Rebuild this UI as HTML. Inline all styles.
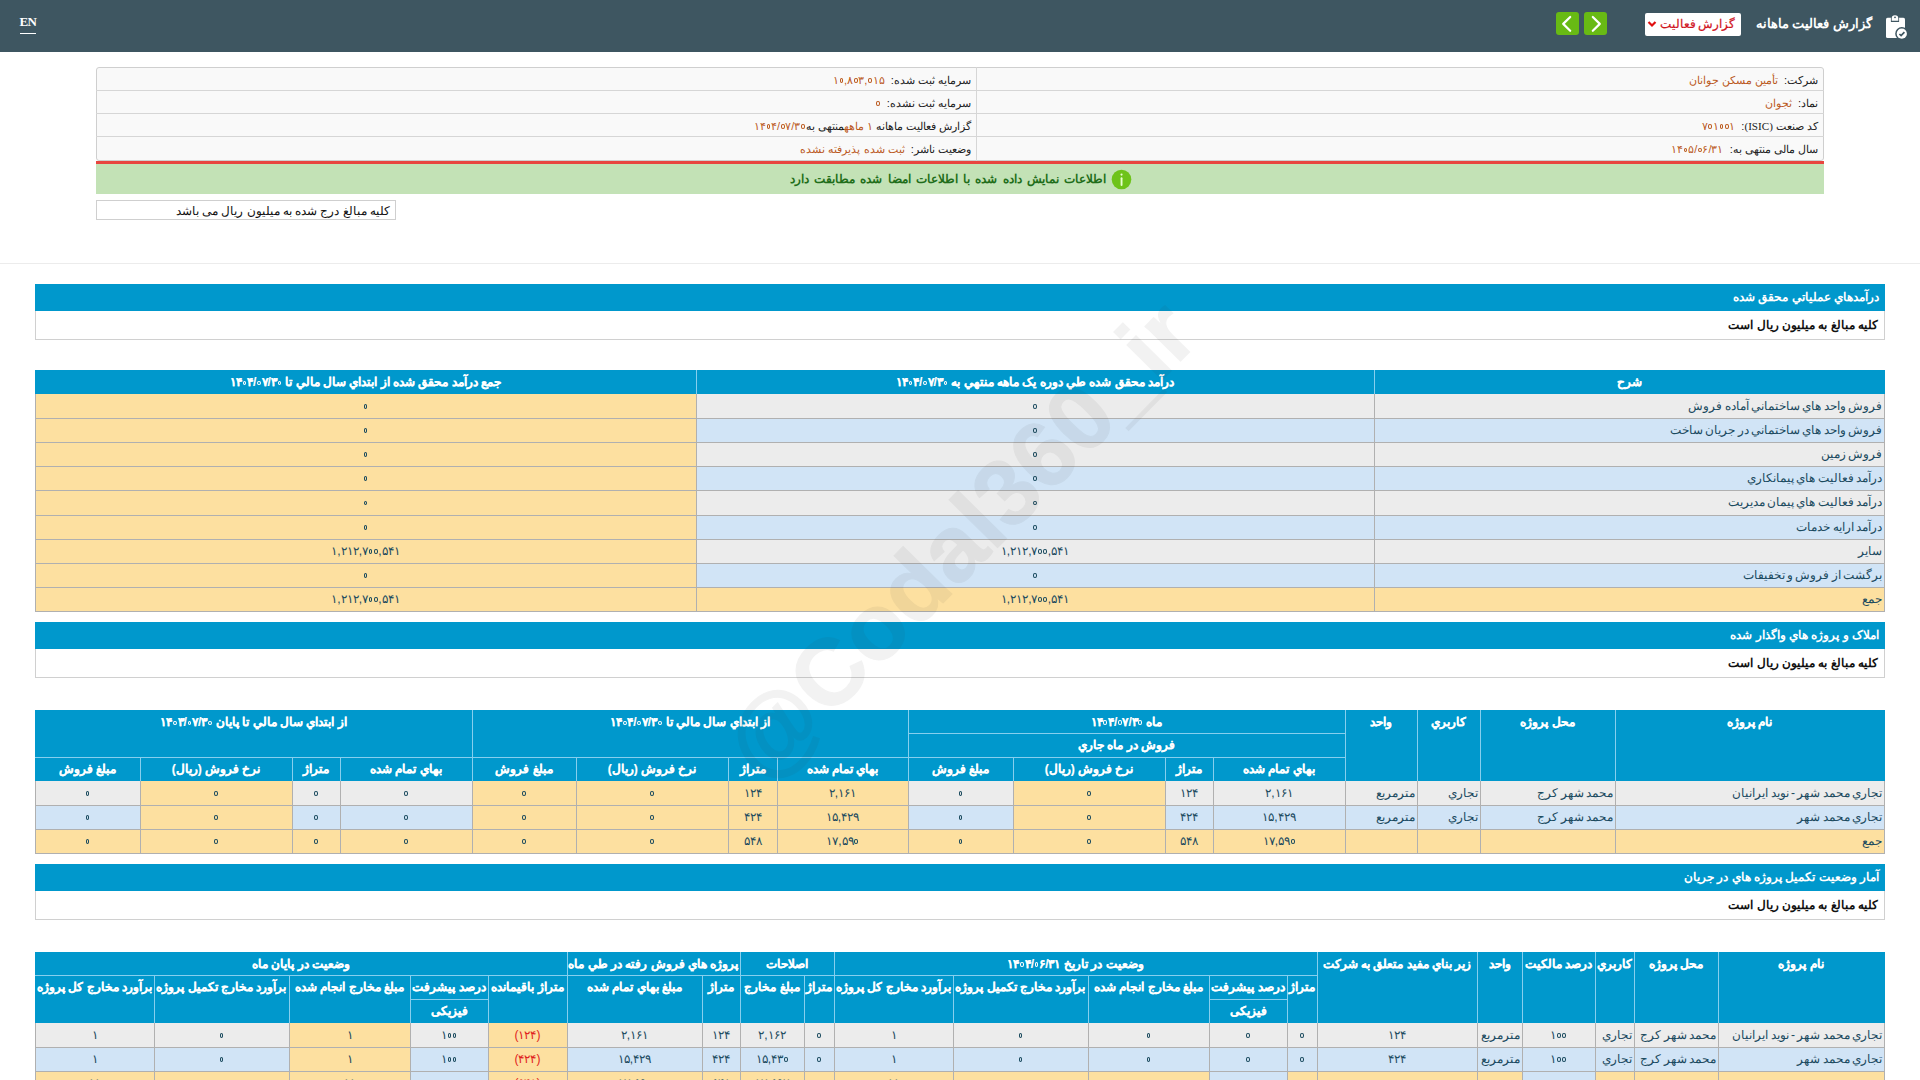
<!DOCTYPE html>
<html lang="fa" dir="rtl"><head><meta charset="utf-8"><title>codal</title>
<style>
html,body{margin:0;padding:0;width:1920px;height:1080px;overflow:hidden;background:#fff;font-family:"Liberation Sans",sans-serif}
body>div,body>svg{position:absolute}
.t{white-space:nowrap;direction:rtl}
.z{display:inline-block;width:1.8px;height:2.2px;border:1.25px solid currentColor;border-radius:50%;margin:0 0.7px;vertical-align:1px}
</style></head><body>
<div style="left:0px;top:0px;width:1920px;height:52px;background:#3e5661"></div>
<div class="t" style="left:19.5px;top:11.5px;font-family:'Liberation Serif',serif;font-size:13px;font-weight:bold;letter-spacing:-0.6px;line-height:20px;color:#fff;direction:ltr">EN</div>
<div style="left:20px;top:33px;width:16px;height:1px;background:#fff"></div>
<div class="t" style="right:48px;top:14.0px;line-height:20px;font-size:13px;font-weight:bold;color:#fff;">گزارش فعالیت ماهانه</div>
<div style="left:1645px;top:13px;width:96px;height:23px;background:#fff;border-radius:2px"></div>
<div class="t" style="right:184.5px;top:13.8px;line-height:20px;font-size:12px;font-weight:normal;color:#d0121c;word-spacing:-0.5px;-webkit-text-stroke:0.2px #d0121c">گزارش فعالیت</div>
<svg style="position:absolute;left:1647px;top:20px" width="10" height="8" viewBox="0 0 10 8"><path d="M1.5 2 L5 5.5 L8.5 2" stroke="#e01010" stroke-width="2.2" fill="none"/></svg>
<div style="left:1556px;top:12px;width:23px;height:23px;background:#68ba14;border-radius:3px"></div>
<svg style="position:absolute;left:1556px;top:12px" width="23" height="23" viewBox="0 0 23 23"><path d="M14.2 5 L7.2 11.9 L14.2 18.8" stroke="#fff" stroke-width="2.2" fill="none" stroke-linecap="round" stroke-linejoin="round"/></svg>
<div style="left:1584px;top:12px;width:23px;height:23px;background:#68ba14;border-radius:3px"></div>
<svg style="position:absolute;left:1584px;top:12px" width="23" height="23" viewBox="0 0 23 23"><path d="M8.8 5 L15.8 11.9 L8.8 18.8" stroke="#fff" stroke-width="2.2" fill="none" stroke-linecap="round" stroke-linejoin="round"/></svg>
<svg style="position:absolute;left:1878px;top:8px" width="36" height="36" viewBox="0 0 36 36">
<rect x="8" y="9.7" width="19" height="20.3" rx="1.6" fill="#fff"/>
<path d="M12.9 14 V10.5 A4.1 4.1 0 0 1 21.1 10.5 V14 Z" fill="#3e5661"/>
<path d="M13.7 12.8 V10.6 A3.3 3.3 0 0 1 20.3 10.6 V12.8 Z" fill="#fff"/>
<circle cx="17" cy="9.3" r="0.9" fill="#3e5661"/>
<circle cx="23.8" cy="25.7" r="6.6" fill="#3e5661"/>
<circle cx="23.8" cy="25.7" r="5.1" fill="#fff"/>
<path d="M21.4 26 L23.1 27.6 L26.4 24.2" stroke="#3e5661" stroke-width="1.7" fill="none"/>
</svg>
<div style="left:96px;top:67px;width:1728px;height:94px;background:#f9f9f9;border:1px solid #cfcfcf;border-radius:3px;box-sizing:border-box"></div>
<div style="left:96px;top:90px;width:1728px;height:1px;background:#d6d6d6"></div>
<div style="left:96px;top:113px;width:1728px;height:1px;background:#d6d6d6"></div>
<div style="left:96px;top:136px;width:1728px;height:1px;background:#d6d6d6"></div>
<div style="left:976px;top:67px;width:1px;height:94px;background:#d6d6d6"></div>
<div class="t" style="right:102px;top:69.5px;line-height:20px;font-size:11.1px;font-weight:normal;color:#222;">شرکت:&nbsp; <span style="color:#bb5a1e">تأمین مسکن جوانان</span></div>
<div class="t" style="right:949px;top:69.5px;line-height:20px;font-size:11.1px;font-weight:normal;color:#222;">سرمایه ثبت شده:&nbsp; <span style="color:#bb5a1e"><bdi dir="ltr">۱<i class="z"></i>,۸<i class="z"></i>۳,<i class="z"></i>۱۵</bdi></span></div>
<div class="t" style="right:102px;top:92.5px;line-height:20px;font-size:11.1px;font-weight:normal;color:#222;">نماد:&nbsp; <span style="color:#bb5a1e">ثجوان</span></div>
<div class="t" style="right:949px;top:92.5px;line-height:20px;font-size:11.1px;font-weight:normal;color:#222;">سرمایه ثبت نشده:&nbsp; <span style="color:#bb5a1e"><bdi dir="ltr"><i class="z"></i></bdi></span></div>
<div class="t" style="right:102px;top:115.5px;line-height:20px;font-size:11.1px;font-weight:normal;color:#222;">کد صنعت <span style="font-family:'Liberation Serif',serif">(ISIC)</span>:&nbsp; <span style="color:#bb5a1e"><bdi dir="ltr">۷<i class="z"></i>۱<i class="z"></i><i class="z"></i>۱</bdi></span></div>
<div class="t" style="right:949px;top:115.5px;line-height:20px;font-size:11.1px;font-weight:normal;color:#222;">گزارش فعالیت ماهانه <span style="color:#bb5a1e">۱ ماهه</span>منتهی به<span style="color:#bb5a1e"><bdi dir="ltr">۱۴<i class="z"></i>۴/<i class="z"></i>۷/۳<i class="z"></i></bdi></span></div>
<div class="t" style="right:102px;top:139.0px;line-height:20px;font-size:11.1px;font-weight:normal;color:#222;">سال مالی منتهی به:&nbsp; <span style="color:#bb5a1e"><bdi dir="ltr">۱۴<i class="z"></i>۵/<i class="z"></i>۶/۳۱</bdi></span></div>
<div class="t" style="right:949px;top:139.0px;line-height:20px;font-size:11.1px;font-weight:normal;color:#222;">وضعیت ناشر:&nbsp; <span style="color:#bb5a1e">ثبت شده پذیرفته نشده</span></div>
<div style="left:96px;top:161px;width:1728px;height:3px;background:#e8453f"></div>
<div style="left:96px;top:164px;width:1728px;height:30px;background:#c3e2b6"></div>
<div class="t" style="right:814px;top:169.0px;line-height:20px;font-size:12px;font-weight:bold;color:#1f6e1a;word-spacing:1.9px">اطلاعات نمایش داده شده با اطلاعات امضا شده مطابقت دارد</div>
<svg style="position:absolute;left:1111px;top:169px" width="21" height="21" viewBox="0 0 21 21"><circle cx="10.5" cy="10.5" r="9.8" fill="#6ec31a"/><rect x="9.6" y="8.3" width="1.9" height="8.7" rx="0.9" fill="#e8ffd0"/><circle cx="10.55" cy="5.6" r="1.1" fill="#e8ffd0"/></svg>
<div style="left:96px;top:200px;width:300px;height:20px;border:1px solid #cfcfcf;box-sizing:border-box;background:#fff"></div>
<div class="t" style="right:1530px;top:200.5px;line-height:20px;font-size:11.8px;font-weight:normal;color:#111;">کلیه مبالغ درج شده به میلیون ریال می باشد</div>
<div style="left:0px;top:263px;width:1920px;height:1px;background:#ececec"></div>
<div style="left:35px;top:284px;width:1850px;height:27px;background:#0098cc"></div>
<div class="t" style="right:41px;top:286.5px;line-height:20px;font-size:12px;font-weight:bold;color:#fff;">درآمدهاي عملياتي محقق شده</div>
<div style="left:35px;top:311px;width:1850px;height:29px;border:1px solid #d0d0d0;border-top:none;box-sizing:border-box;background:#fff"></div>
<div class="t" style="right:42px;top:314.5px;line-height:20px;font-size:12px;font-weight:bold;color:#111;">کلیه مبالغ به میلیون ریال است</div>
<div style="left:35px;top:622px;width:1850px;height:27px;background:#0098cc"></div>
<div class="t" style="right:41px;top:624.5px;line-height:20px;font-size:12px;font-weight:bold;color:#fff;">املاک و پروژه هاي واگذار شده</div>
<div style="left:35px;top:649px;width:1850px;height:29px;border:1px solid #d0d0d0;border-top:none;box-sizing:border-box;background:#fff"></div>
<div class="t" style="right:42px;top:652.5px;line-height:20px;font-size:12px;font-weight:bold;color:#111;">کلیه مبالغ به میلیون ریال است</div>
<div style="left:35px;top:864px;width:1850px;height:27px;background:#0098cc"></div>
<div class="t" style="right:41px;top:866.5px;line-height:20px;font-size:12px;font-weight:bold;color:#fff;">آمار وضعیت تکمیل پروژه هاي در جريان</div>
<div style="left:35px;top:891px;width:1850px;height:29px;border:1px solid #d0d0d0;border-top:none;box-sizing:border-box;background:#fff"></div>
<div class="t" style="right:42px;top:894.5px;line-height:20px;font-size:12px;font-weight:bold;color:#111;">کلیه مبالغ به میلیون ریال است</div>
<div style="left:35px;top:370px;width:1850px;height:24px;background:#86cfee"></div>
<div style="left:35px;top:370px;width:661px;height:24px;background:#0098cc"></div>
<div class="t" style="left:35px;width:661px;top:372.0px;line-height:20px;font-size:12px;font-weight:bold;color:#fff;text-align:center;-webkit-text-stroke:0.15px #fff">جمع درآمد محقق شده از ابتداي سال مالي تا <bdi dir="ltr">۱۴<i class="z"></i>۴/<i class="z"></i>۷/۳<i class="z"></i></bdi></div>
<div style="left:697px;top:370px;width:677px;height:24px;background:#0098cc"></div>
<div class="t" style="left:696px;width:678px;top:372.0px;line-height:20px;font-size:12px;font-weight:bold;color:#fff;text-align:center;-webkit-text-stroke:0.15px #fff">درآمد محقق شده طي دوره يک ماهه منتهي به <bdi dir="ltr">۱۴<i class="z"></i>۴/<i class="z"></i>۷/۳<i class="z"></i></bdi></div>
<div style="left:1375px;top:370px;width:510px;height:24px;background:#0098cc"></div>
<div class="t" style="left:1374px;width:510px;top:372.0px;line-height:20px;font-size:12px;font-weight:bold;color:#fff;text-align:center;-webkit-text-stroke:0.15px #fff">شرح</div>
<div style="left:35px;top:394px;width:1850px;height:218.125px;background:#b0b0b0"></div>
<div style="left:36px;top:394px;width:660px;height:24px;background:#fde0a0"></div>
<div class="t" style="left:35px;width:661px;top:395.5px;line-height:20px;font-size:12px;font-weight:normal;color:#1a4a5e;text-align:center;"><bdi dir="ltr"><i class="z"></i></bdi></div>
<div style="left:697px;top:394px;width:677px;height:24px;background:#ececec"></div>
<div class="t" style="left:696px;width:678px;top:395.5px;line-height:20px;font-size:12px;font-weight:normal;color:#1a4a5e;text-align:center;"><bdi dir="ltr"><i class="z"></i></bdi></div>
<div style="left:1375px;top:394px;width:509px;height:24px;background:#ececec"></div>
<div class="t" style="right:38px;top:395.5px;line-height:20px;font-size:12px;font-weight:normal;color:#1a4a5e;word-spacing:-1px">فروش واحد هاي ساختماني آماده فروش</div>
<div style="left:36px;top:419px;width:660px;height:23px;background:#fde0a0"></div>
<div class="t" style="left:35px;width:661px;top:419.5px;line-height:20px;font-size:12px;font-weight:normal;color:#1a4a5e;text-align:center;"><bdi dir="ltr"><i class="z"></i></bdi></div>
<div style="left:697px;top:419px;width:677px;height:23px;background:#d1e4f6"></div>
<div class="t" style="left:696px;width:678px;top:419.5px;line-height:20px;font-size:12px;font-weight:normal;color:#1a4a5e;text-align:center;"><bdi dir="ltr"><i class="z"></i></bdi></div>
<div style="left:1375px;top:419px;width:509px;height:23px;background:#d1e4f6"></div>
<div class="t" style="right:38px;top:419.5px;line-height:20px;font-size:12px;font-weight:normal;color:#1a4a5e;word-spacing:-1px">فروش واحد هاي ساختماني در جريان ساخت</div>
<div style="left:36px;top:443px;width:660px;height:23px;background:#fde0a0"></div>
<div class="t" style="left:35px;width:661px;top:443.5px;line-height:20px;font-size:12px;font-weight:normal;color:#1a4a5e;text-align:center;"><bdi dir="ltr"><i class="z"></i></bdi></div>
<div style="left:697px;top:443px;width:677px;height:23px;background:#ececec"></div>
<div class="t" style="left:696px;width:678px;top:443.5px;line-height:20px;font-size:12px;font-weight:normal;color:#1a4a5e;text-align:center;"><bdi dir="ltr"><i class="z"></i></bdi></div>
<div style="left:1375px;top:443px;width:509px;height:23px;background:#ececec"></div>
<div class="t" style="right:38px;top:443.5px;line-height:20px;font-size:12px;font-weight:normal;color:#1a4a5e;word-spacing:-1px">فروش زمين</div>
<div style="left:36px;top:467px;width:660px;height:23px;background:#fde0a0"></div>
<div class="t" style="left:35px;width:661px;top:467.5px;line-height:20px;font-size:12px;font-weight:normal;color:#1a4a5e;text-align:center;"><bdi dir="ltr"><i class="z"></i></bdi></div>
<div style="left:697px;top:467px;width:677px;height:23px;background:#d1e4f6"></div>
<div class="t" style="left:696px;width:678px;top:467.5px;line-height:20px;font-size:12px;font-weight:normal;color:#1a4a5e;text-align:center;"><bdi dir="ltr"><i class="z"></i></bdi></div>
<div style="left:1375px;top:467px;width:509px;height:23px;background:#d1e4f6"></div>
<div class="t" style="right:38px;top:467.5px;line-height:20px;font-size:12px;font-weight:normal;color:#1a4a5e;word-spacing:-1px">درآمد فعاليت هاي پيمانكاري</div>
<div style="left:36px;top:491px;width:660px;height:24px;background:#fde0a0"></div>
<div class="t" style="left:35px;width:661px;top:492.0px;line-height:20px;font-size:12px;font-weight:normal;color:#1a4a5e;text-align:center;"><bdi dir="ltr"><i class="z"></i></bdi></div>
<div style="left:697px;top:491px;width:677px;height:24px;background:#ececec"></div>
<div class="t" style="left:696px;width:678px;top:492.0px;line-height:20px;font-size:12px;font-weight:normal;color:#1a4a5e;text-align:center;"><bdi dir="ltr"><i class="z"></i></bdi></div>
<div style="left:1375px;top:491px;width:509px;height:24px;background:#ececec"></div>
<div class="t" style="right:38px;top:492.0px;line-height:20px;font-size:12px;font-weight:normal;color:#1a4a5e;word-spacing:-1px">درآمد فعاليت هاي پيمان مديريت</div>
<div style="left:36px;top:516px;width:660px;height:23px;background:#fde0a0"></div>
<div class="t" style="left:35px;width:661px;top:516.5px;line-height:20px;font-size:12px;font-weight:normal;color:#1a4a5e;text-align:center;"><bdi dir="ltr"><i class="z"></i></bdi></div>
<div style="left:697px;top:516px;width:677px;height:23px;background:#d1e4f6"></div>
<div class="t" style="left:696px;width:678px;top:516.5px;line-height:20px;font-size:12px;font-weight:normal;color:#1a4a5e;text-align:center;"><bdi dir="ltr"><i class="z"></i></bdi></div>
<div style="left:1375px;top:516px;width:509px;height:23px;background:#d1e4f6"></div>
<div class="t" style="right:38px;top:516.5px;line-height:20px;font-size:12px;font-weight:normal;color:#1a4a5e;word-spacing:-1px">درآمد ارايه خدمات</div>
<div style="left:36px;top:540px;width:660px;height:23px;background:#fde0a0"></div>
<div class="t" style="left:35px;width:661px;top:540.5px;line-height:20px;font-size:12px;font-weight:normal;color:#1a4a5e;text-align:center;"><bdi dir="ltr">۱,۲۱۲,۷<i class="z"></i><i class="z"></i>,۵۴۱</bdi></div>
<div style="left:697px;top:540px;width:677px;height:23px;background:#ececec"></div>
<div class="t" style="left:696px;width:678px;top:540.5px;line-height:20px;font-size:12px;font-weight:normal;color:#1a4a5e;text-align:center;"><bdi dir="ltr">۱,۲۱۲,۷<i class="z"></i><i class="z"></i>,۵۴۱</bdi></div>
<div style="left:1375px;top:540px;width:509px;height:23px;background:#ececec"></div>
<div class="t" style="right:38px;top:540.5px;line-height:20px;font-size:12px;font-weight:normal;color:#1a4a5e;word-spacing:-1px">ساير</div>
<div style="left:36px;top:564px;width:660px;height:23px;background:#fde0a0"></div>
<div class="t" style="left:35px;width:661px;top:564.5px;line-height:20px;font-size:12px;font-weight:normal;color:#1a4a5e;text-align:center;"><bdi dir="ltr"><i class="z"></i></bdi></div>
<div style="left:697px;top:564px;width:677px;height:23px;background:#d1e4f6"></div>
<div class="t" style="left:696px;width:678px;top:564.5px;line-height:20px;font-size:12px;font-weight:normal;color:#1a4a5e;text-align:center;"><bdi dir="ltr"><i class="z"></i></bdi></div>
<div style="left:1375px;top:564px;width:509px;height:23px;background:#d1e4f6"></div>
<div class="t" style="right:38px;top:564.5px;line-height:20px;font-size:12px;font-weight:normal;color:#1a4a5e;word-spacing:-1px">برگشت از فروش و تخفيفات</div>
<div style="left:36px;top:588px;width:660px;height:23px;background:#fde0a0"></div>
<div class="t" style="left:35px;width:661px;top:588.5px;line-height:20px;font-size:12px;font-weight:normal;color:#1a4a5e;text-align:center;"><bdi dir="ltr">۱,۲۱۲,۷<i class="z"></i><i class="z"></i>,۵۴۱</bdi></div>
<div style="left:697px;top:588px;width:677px;height:23px;background:#fde0a0"></div>
<div class="t" style="left:696px;width:678px;top:588.5px;line-height:20px;font-size:12px;font-weight:normal;color:#1a4a5e;text-align:center;"><bdi dir="ltr">۱,۲۱۲,۷<i class="z"></i><i class="z"></i>,۵۴۱</bdi></div>
<div style="left:1375px;top:588px;width:509px;height:23px;background:#fde0a0"></div>
<div class="t" style="right:38px;top:588.5px;line-height:20px;font-size:12px;font-weight:normal;color:#1a4a5e;word-spacing:-1px">جمع</div>
<div style="left:35px;top:710px;width:1850px;height:71px;background:#86cfee"></div>
<div style="left:35px;top:758px;width:105px;height:23px;background:#0098cc"></div>
<div class="t" style="left:35px;width:105px;top:759.0px;line-height:20px;font-size:12px;font-weight:bold;color:#fff;text-align:center;-webkit-text-stroke:0.15px #fff">مبلغ فروش</div>
<div style="left:141px;top:758px;width:151px;height:23px;background:#0098cc"></div>
<div class="t" style="left:140px;width:152px;top:759.0px;line-height:20px;font-size:12px;font-weight:bold;color:#fff;text-align:center;-webkit-text-stroke:0.15px #fff">نرخ فروش (ريال)</div>
<div style="left:293px;top:758px;width:47px;height:23px;background:#0098cc"></div>
<div class="t" style="left:292px;width:48px;top:759.0px;line-height:20px;font-size:12px;font-weight:bold;color:#fff;text-align:center;-webkit-text-stroke:0.15px #fff">متراژ</div>
<div style="left:341px;top:758px;width:131px;height:23px;background:#0098cc"></div>
<div class="t" style="left:340px;width:132px;top:759.0px;line-height:20px;font-size:12px;font-weight:bold;color:#fff;text-align:center;-webkit-text-stroke:0.15px #fff">بهاي تمام شده</div>
<div style="left:473px;top:758px;width:103px;height:23px;background:#0098cc"></div>
<div class="t" style="left:472px;width:104px;top:759.0px;line-height:20px;font-size:12px;font-weight:bold;color:#fff;text-align:center;-webkit-text-stroke:0.15px #fff">مبلغ فروش</div>
<div style="left:577px;top:758px;width:151px;height:23px;background:#0098cc"></div>
<div class="t" style="left:576px;width:152px;top:759.0px;line-height:20px;font-size:12px;font-weight:bold;color:#fff;text-align:center;-webkit-text-stroke:0.15px #fff">نرخ فروش (ريال)</div>
<div style="left:729px;top:758px;width:48px;height:23px;background:#0098cc"></div>
<div class="t" style="left:728px;width:49px;top:759.0px;line-height:20px;font-size:12px;font-weight:bold;color:#fff;text-align:center;-webkit-text-stroke:0.15px #fff">متراژ</div>
<div style="left:778px;top:758px;width:130px;height:23px;background:#0098cc"></div>
<div class="t" style="left:777px;width:131px;top:759.0px;line-height:20px;font-size:12px;font-weight:bold;color:#fff;text-align:center;-webkit-text-stroke:0.15px #fff">بهاي تمام شده</div>
<div style="left:909px;top:758px;width:104px;height:23px;background:#0098cc"></div>
<div class="t" style="left:908px;width:105px;top:759.0px;line-height:20px;font-size:12px;font-weight:bold;color:#fff;text-align:center;-webkit-text-stroke:0.15px #fff">مبلغ فروش</div>
<div style="left:1014px;top:758px;width:151px;height:23px;background:#0098cc"></div>
<div class="t" style="left:1013px;width:152px;top:759.0px;line-height:20px;font-size:12px;font-weight:bold;color:#fff;text-align:center;-webkit-text-stroke:0.15px #fff">نرخ فروش (ريال)</div>
<div style="left:1166px;top:758px;width:47px;height:23px;background:#0098cc"></div>
<div class="t" style="left:1165px;width:48px;top:759.0px;line-height:20px;font-size:12px;font-weight:bold;color:#fff;text-align:center;-webkit-text-stroke:0.15px #fff">متراژ</div>
<div style="left:1214px;top:758px;width:131px;height:23px;background:#0098cc"></div>
<div class="t" style="left:1213px;width:132px;top:759.0px;line-height:20px;font-size:12px;font-weight:bold;color:#fff;text-align:center;-webkit-text-stroke:0.15px #fff">بهاي تمام شده</div>
<div style="left:35px;top:710px;width:437px;height:47px;background:#0098cc"></div>
<div class="t" style="left:35px;width:437px;top:711.8px;line-height:20px;font-size:12px;font-weight:bold;color:#fff;text-align:center;-webkit-text-stroke:0.15px #fff">از ابتداي سال مالي تا پايان <bdi dir="ltr">۱۴<i class="z"></i>۳/<i class="z"></i>۷/۳<i class="z"></i></bdi></div>
<div style="left:473px;top:710px;width:435px;height:47px;background:#0098cc"></div>
<div class="t" style="left:472px;width:436px;top:711.8px;line-height:20px;font-size:12px;font-weight:bold;color:#fff;text-align:center;-webkit-text-stroke:0.15px #fff">از ابتداي سال مالي تا <bdi dir="ltr">۱۴<i class="z"></i>۴/<i class="z"></i>۷/۳<i class="z"></i></bdi></div>
<div style="left:909px;top:710px;width:436px;height:23px;background:#0098cc"></div>
<div class="t" style="left:908px;width:437px;top:711.5px;line-height:20px;font-size:12px;font-weight:bold;color:#fff;text-align:center;-webkit-text-stroke:0.15px #fff">ماه <bdi dir="ltr">۱۴<i class="z"></i>۴/<i class="z"></i>۷/۳<i class="z"></i></bdi></div>
<div style="left:909px;top:734px;width:436px;height:23px;background:#0098cc"></div>
<div class="t" style="left:908px;width:437px;top:735.0px;line-height:20px;font-size:12px;font-weight:bold;color:#fff;text-align:center;-webkit-text-stroke:0.15px #fff">فروش در ماه جاري</div>
<div style="left:1346px;top:710px;width:71px;height:71px;background:#0098cc"></div>
<div class="t" style="left:1345px;width:72px;top:711.8px;line-height:20px;font-size:12px;font-weight:bold;color:#fff;text-align:center;-webkit-text-stroke:0.15px #fff">واحد</div>
<div style="left:1418px;top:710px;width:62px;height:71px;background:#0098cc"></div>
<div class="t" style="left:1417px;width:63px;top:711.8px;line-height:20px;font-size:12px;font-weight:bold;color:#fff;text-align:center;-webkit-text-stroke:0.15px #fff">کاربري</div>
<div style="left:1481px;top:710px;width:134px;height:71px;background:#0098cc"></div>
<div class="t" style="left:1480px;width:135px;top:711.8px;line-height:20px;font-size:12px;font-weight:bold;color:#fff;text-align:center;-webkit-text-stroke:0.15px #fff">محل پروژه</div>
<div style="left:1616px;top:710px;width:269px;height:71px;background:#0098cc"></div>
<div class="t" style="left:1615px;width:269px;top:711.8px;line-height:20px;font-size:12px;font-weight:bold;color:#fff;text-align:center;-webkit-text-stroke:0.15px #fff">نام پروژه</div>
<div style="left:35px;top:781px;width:1850px;height:73px;background:#b0b0b0"></div>
<div style="left:36px;top:781px;width:104px;height:24px;background:#ececec"></div>
<div class="t" style="left:35px;width:105px;top:782.5px;line-height:20px;font-size:12px;font-weight:normal;color:#1a4a5e;text-align:center;"><bdi dir="ltr"><i class="z"></i></bdi></div>
<div style="left:141px;top:781px;width:151px;height:24px;background:#fde0a0"></div>
<div class="t" style="left:140px;width:152px;top:782.5px;line-height:20px;font-size:12px;font-weight:normal;color:#1a4a5e;text-align:center;"><bdi dir="ltr"><i class="z"></i></bdi></div>
<div style="left:293px;top:781px;width:47px;height:24px;background:#ececec"></div>
<div class="t" style="left:292px;width:48px;top:782.5px;line-height:20px;font-size:12px;font-weight:normal;color:#1a4a5e;text-align:center;"><bdi dir="ltr"><i class="z"></i></bdi></div>
<div style="left:341px;top:781px;width:131px;height:24px;background:#ececec"></div>
<div class="t" style="left:340px;width:132px;top:782.5px;line-height:20px;font-size:12px;font-weight:normal;color:#1a4a5e;text-align:center;"><bdi dir="ltr"><i class="z"></i></bdi></div>
<div style="left:473px;top:781px;width:103px;height:24px;background:#fde0a0"></div>
<div class="t" style="left:472px;width:104px;top:782.5px;line-height:20px;font-size:12px;font-weight:normal;color:#1a4a5e;text-align:center;"><bdi dir="ltr"><i class="z"></i></bdi></div>
<div style="left:577px;top:781px;width:151px;height:24px;background:#fde0a0"></div>
<div class="t" style="left:576px;width:152px;top:782.5px;line-height:20px;font-size:12px;font-weight:normal;color:#1a4a5e;text-align:center;"><bdi dir="ltr"><i class="z"></i></bdi></div>
<div style="left:729px;top:781px;width:48px;height:24px;background:#fde0a0"></div>
<div class="t" style="left:728px;width:49px;top:782.5px;line-height:20px;font-size:12px;font-weight:normal;color:#1a4a5e;text-align:center;"><bdi dir="ltr">۱۲۴</bdi></div>
<div style="left:778px;top:781px;width:130px;height:24px;background:#fde0a0"></div>
<div class="t" style="left:777px;width:131px;top:782.5px;line-height:20px;font-size:12px;font-weight:normal;color:#1a4a5e;text-align:center;"><bdi dir="ltr">۲,۱۶۱</bdi></div>
<div style="left:909px;top:781px;width:104px;height:24px;background:#ececec"></div>
<div class="t" style="left:908px;width:105px;top:782.5px;line-height:20px;font-size:12px;font-weight:normal;color:#1a4a5e;text-align:center;"><bdi dir="ltr"><i class="z"></i></bdi></div>
<div style="left:1014px;top:781px;width:151px;height:24px;background:#fde0a0"></div>
<div class="t" style="left:1013px;width:152px;top:782.5px;line-height:20px;font-size:12px;font-weight:normal;color:#1a4a5e;text-align:center;"><bdi dir="ltr"><i class="z"></i></bdi></div>
<div style="left:1166px;top:781px;width:47px;height:24px;background:#ececec"></div>
<div class="t" style="left:1165px;width:48px;top:782.5px;line-height:20px;font-size:12px;font-weight:normal;color:#1a4a5e;text-align:center;"><bdi dir="ltr">۱۲۴</bdi></div>
<div style="left:1214px;top:781px;width:131px;height:24px;background:#ececec"></div>
<div class="t" style="left:1213px;width:132px;top:782.5px;line-height:20px;font-size:12px;font-weight:normal;color:#1a4a5e;text-align:center;"><bdi dir="ltr">۲,۱۶۱</bdi></div>
<div style="left:1346px;top:781px;width:71px;height:24px;background:#ececec"></div>
<div class="t" style="right:505px;top:782.5px;line-height:20px;font-size:12px;font-weight:normal;color:#1a4a5e;word-spacing:-1px">مترمربع</div>
<div style="left:1418px;top:781px;width:62px;height:24px;background:#ececec"></div>
<div class="t" style="right:442px;top:782.5px;line-height:20px;font-size:12px;font-weight:normal;color:#1a4a5e;word-spacing:-1px">تجاري</div>
<div style="left:1481px;top:781px;width:134px;height:24px;background:#ececec"></div>
<div class="t" style="right:307px;top:782.5px;line-height:20px;font-size:12px;font-weight:normal;color:#1a4a5e;word-spacing:-1px">محمد شهر کرج</div>
<div style="left:1616px;top:781px;width:268px;height:24px;background:#ececec"></div>
<div class="t" style="right:38px;top:782.5px;line-height:20px;font-size:12px;font-weight:normal;color:#1a4a5e;word-spacing:-1px">تجاري محمد شهر - نويد ايرانيان</div>
<div style="left:36px;top:806px;width:104px;height:23px;background:#d1e4f6"></div>
<div class="t" style="left:35px;width:105px;top:806.5px;line-height:20px;font-size:12px;font-weight:normal;color:#1a4a5e;text-align:center;"><bdi dir="ltr"><i class="z"></i></bdi></div>
<div style="left:141px;top:806px;width:151px;height:23px;background:#fde0a0"></div>
<div class="t" style="left:140px;width:152px;top:806.5px;line-height:20px;font-size:12px;font-weight:normal;color:#1a4a5e;text-align:center;"><bdi dir="ltr"><i class="z"></i></bdi></div>
<div style="left:293px;top:806px;width:47px;height:23px;background:#d1e4f6"></div>
<div class="t" style="left:292px;width:48px;top:806.5px;line-height:20px;font-size:12px;font-weight:normal;color:#1a4a5e;text-align:center;"><bdi dir="ltr"><i class="z"></i></bdi></div>
<div style="left:341px;top:806px;width:131px;height:23px;background:#d1e4f6"></div>
<div class="t" style="left:340px;width:132px;top:806.5px;line-height:20px;font-size:12px;font-weight:normal;color:#1a4a5e;text-align:center;"><bdi dir="ltr"><i class="z"></i></bdi></div>
<div style="left:473px;top:806px;width:103px;height:23px;background:#fde0a0"></div>
<div class="t" style="left:472px;width:104px;top:806.5px;line-height:20px;font-size:12px;font-weight:normal;color:#1a4a5e;text-align:center;"><bdi dir="ltr"><i class="z"></i></bdi></div>
<div style="left:577px;top:806px;width:151px;height:23px;background:#fde0a0"></div>
<div class="t" style="left:576px;width:152px;top:806.5px;line-height:20px;font-size:12px;font-weight:normal;color:#1a4a5e;text-align:center;"><bdi dir="ltr"><i class="z"></i></bdi></div>
<div style="left:729px;top:806px;width:48px;height:23px;background:#fde0a0"></div>
<div class="t" style="left:728px;width:49px;top:806.5px;line-height:20px;font-size:12px;font-weight:normal;color:#1a4a5e;text-align:center;"><bdi dir="ltr">۴۲۴</bdi></div>
<div style="left:778px;top:806px;width:130px;height:23px;background:#fde0a0"></div>
<div class="t" style="left:777px;width:131px;top:806.5px;line-height:20px;font-size:12px;font-weight:normal;color:#1a4a5e;text-align:center;"><bdi dir="ltr">۱۵,۴۲۹</bdi></div>
<div style="left:909px;top:806px;width:104px;height:23px;background:#d1e4f6"></div>
<div class="t" style="left:908px;width:105px;top:806.5px;line-height:20px;font-size:12px;font-weight:normal;color:#1a4a5e;text-align:center;"><bdi dir="ltr"><i class="z"></i></bdi></div>
<div style="left:1014px;top:806px;width:151px;height:23px;background:#fde0a0"></div>
<div class="t" style="left:1013px;width:152px;top:806.5px;line-height:20px;font-size:12px;font-weight:normal;color:#1a4a5e;text-align:center;"><bdi dir="ltr"><i class="z"></i></bdi></div>
<div style="left:1166px;top:806px;width:47px;height:23px;background:#d1e4f6"></div>
<div class="t" style="left:1165px;width:48px;top:806.5px;line-height:20px;font-size:12px;font-weight:normal;color:#1a4a5e;text-align:center;"><bdi dir="ltr">۴۲۴</bdi></div>
<div style="left:1214px;top:806px;width:131px;height:23px;background:#d1e4f6"></div>
<div class="t" style="left:1213px;width:132px;top:806.5px;line-height:20px;font-size:12px;font-weight:normal;color:#1a4a5e;text-align:center;"><bdi dir="ltr">۱۵,۴۲۹</bdi></div>
<div style="left:1346px;top:806px;width:71px;height:23px;background:#d1e4f6"></div>
<div class="t" style="right:505px;top:806.5px;line-height:20px;font-size:12px;font-weight:normal;color:#1a4a5e;word-spacing:-1px">مترمربع</div>
<div style="left:1418px;top:806px;width:62px;height:23px;background:#d1e4f6"></div>
<div class="t" style="right:442px;top:806.5px;line-height:20px;font-size:12px;font-weight:normal;color:#1a4a5e;word-spacing:-1px">تجاري</div>
<div style="left:1481px;top:806px;width:134px;height:23px;background:#d1e4f6"></div>
<div class="t" style="right:307px;top:806.5px;line-height:20px;font-size:12px;font-weight:normal;color:#1a4a5e;word-spacing:-1px">محمد شهر کرج</div>
<div style="left:1616px;top:806px;width:268px;height:23px;background:#d1e4f6"></div>
<div class="t" style="right:38px;top:806.5px;line-height:20px;font-size:12px;font-weight:normal;color:#1a4a5e;word-spacing:-1px">تجاري محمد شهر</div>
<div style="left:36px;top:830px;width:104px;height:23px;background:#fde0a0"></div>
<div class="t" style="left:35px;width:105px;top:830.5px;line-height:20px;font-size:12px;font-weight:normal;color:#1a4a5e;text-align:center;"><bdi dir="ltr"><i class="z"></i></bdi></div>
<div style="left:141px;top:830px;width:151px;height:23px;background:#fde0a0"></div>
<div class="t" style="left:140px;width:152px;top:830.5px;line-height:20px;font-size:12px;font-weight:normal;color:#1a4a5e;text-align:center;"><bdi dir="ltr"><i class="z"></i></bdi></div>
<div style="left:293px;top:830px;width:47px;height:23px;background:#fde0a0"></div>
<div class="t" style="left:292px;width:48px;top:830.5px;line-height:20px;font-size:12px;font-weight:normal;color:#1a4a5e;text-align:center;"><bdi dir="ltr"><i class="z"></i></bdi></div>
<div style="left:341px;top:830px;width:131px;height:23px;background:#fde0a0"></div>
<div class="t" style="left:340px;width:132px;top:830.5px;line-height:20px;font-size:12px;font-weight:normal;color:#1a4a5e;text-align:center;"><bdi dir="ltr"><i class="z"></i></bdi></div>
<div style="left:473px;top:830px;width:103px;height:23px;background:#fde0a0"></div>
<div class="t" style="left:472px;width:104px;top:830.5px;line-height:20px;font-size:12px;font-weight:normal;color:#1a4a5e;text-align:center;"><bdi dir="ltr"><i class="z"></i></bdi></div>
<div style="left:577px;top:830px;width:151px;height:23px;background:#fde0a0"></div>
<div class="t" style="left:576px;width:152px;top:830.5px;line-height:20px;font-size:12px;font-weight:normal;color:#1a4a5e;text-align:center;"><bdi dir="ltr"><i class="z"></i></bdi></div>
<div style="left:729px;top:830px;width:48px;height:23px;background:#fde0a0"></div>
<div class="t" style="left:728px;width:49px;top:830.5px;line-height:20px;font-size:12px;font-weight:normal;color:#1a4a5e;text-align:center;"><bdi dir="ltr">۵۴۸</bdi></div>
<div style="left:778px;top:830px;width:130px;height:23px;background:#fde0a0"></div>
<div class="t" style="left:777px;width:131px;top:830.5px;line-height:20px;font-size:12px;font-weight:normal;color:#1a4a5e;text-align:center;"><bdi dir="ltr">۱۷,۵۹<i class="z"></i></bdi></div>
<div style="left:909px;top:830px;width:104px;height:23px;background:#fde0a0"></div>
<div class="t" style="left:908px;width:105px;top:830.5px;line-height:20px;font-size:12px;font-weight:normal;color:#1a4a5e;text-align:center;"><bdi dir="ltr"><i class="z"></i></bdi></div>
<div style="left:1014px;top:830px;width:151px;height:23px;background:#fde0a0"></div>
<div class="t" style="left:1013px;width:152px;top:830.5px;line-height:20px;font-size:12px;font-weight:normal;color:#1a4a5e;text-align:center;"><bdi dir="ltr"><i class="z"></i></bdi></div>
<div style="left:1166px;top:830px;width:47px;height:23px;background:#fde0a0"></div>
<div class="t" style="left:1165px;width:48px;top:830.5px;line-height:20px;font-size:12px;font-weight:normal;color:#1a4a5e;text-align:center;"><bdi dir="ltr">۵۴۸</bdi></div>
<div style="left:1214px;top:830px;width:131px;height:23px;background:#fde0a0"></div>
<div class="t" style="left:1213px;width:132px;top:830.5px;line-height:20px;font-size:12px;font-weight:normal;color:#1a4a5e;text-align:center;"><bdi dir="ltr">۱۷,۵۹<i class="z"></i></bdi></div>
<div style="left:1346px;top:830px;width:71px;height:23px;background:#fde0a0"></div>
<div style="left:1418px;top:830px;width:62px;height:23px;background:#fde0a0"></div>
<div style="left:1481px;top:830px;width:134px;height:23px;background:#fde0a0"></div>
<div style="left:1616px;top:830px;width:268px;height:23px;background:#fde0a0"></div>
<div class="t" style="right:38px;top:830.5px;line-height:20px;font-size:12px;font-weight:normal;color:#1a4a5e;word-spacing:-1px">جمع</div>
<div style="left:35px;top:952px;width:1850px;height:71px;background:#86cfee"></div>
<div style="left:1719px;top:952px;width:166px;height:71px;background:#0098cc"></div>
<div class="t" style="left:1718px;width:166px;top:953.8px;line-height:20px;font-size:12px;font-weight:bold;color:#fff;text-align:center;-webkit-text-stroke:0.15px #fff">نام پروژه</div>
<div style="left:1635px;top:952px;width:83px;height:71px;background:#0098cc"></div>
<div class="t" style="left:1634px;width:84px;top:953.8px;line-height:20px;font-size:12px;font-weight:bold;color:#fff;text-align:center;-webkit-text-stroke:0.15px #fff">محل پروژه</div>
<div style="left:1596px;top:952px;width:38px;height:71px;background:#0098cc"></div>
<div class="t" style="left:1595px;width:39px;top:953.8px;line-height:20px;font-size:12px;font-weight:bold;color:#fff;text-align:center;-webkit-text-stroke:0.15px #fff">کاربري</div>
<div style="left:1523px;top:952px;width:72px;height:71px;background:#0098cc"></div>
<div class="t" style="left:1522px;width:73px;top:953.8px;line-height:20px;font-size:12px;font-weight:bold;color:#fff;text-align:center;-webkit-text-stroke:0.15px #fff">درصد مالکیت</div>
<div style="left:1478px;top:952px;width:44px;height:71px;background:#0098cc"></div>
<div class="t" style="left:1477px;width:45px;top:953.8px;line-height:20px;font-size:12px;font-weight:bold;color:#fff;text-align:center;-webkit-text-stroke:0.15px #fff">واحد</div>
<div style="left:1318px;top:952px;width:159px;height:71px;background:#0098cc"></div>
<div class="t" style="left:1317px;width:160px;top:953.8px;line-height:20px;font-size:12px;font-weight:bold;color:#fff;text-align:center;-webkit-text-stroke:0.15px #fff">زير بناي مفيد متعلق به شرکت</div>
<div style="left:835px;top:952px;width:482px;height:23px;background:#0098cc"></div>
<div class="t" style="left:834px;width:483px;top:953.5px;line-height:20px;font-size:12px;font-weight:bold;color:#fff;text-align:center;-webkit-text-stroke:0.15px #fff">وضعیت در تاریخ <bdi dir="ltr">۱۴<i class="z"></i>۴/<i class="z"></i>۶/۳۱</bdi></div>
<div style="left:1288px;top:976px;width:29px;height:47px;background:#0098cc"></div>
<div class="t" style="left:1287px;width:30px;top:976.8px;line-height:20px;font-size:12px;font-weight:bold;color:#fff;text-align:center;-webkit-text-stroke:0.15px #fff">متراژ</div>
<div style="left:1210px;top:976px;width:77px;height:23px;background:#0098cc"></div>
<div class="t" style="left:1209px;width:78px;top:977.0px;line-height:20px;font-size:12px;font-weight:bold;color:#fff;text-align:center;-webkit-text-stroke:0.15px #fff">درصد پیشرفت</div>
<div style="left:1210px;top:1000px;width:77px;height:23px;background:#0098cc"></div>
<div class="t" style="left:1209px;width:78px;top:1001.0px;line-height:20px;font-size:12px;font-weight:bold;color:#fff;text-align:center;-webkit-text-stroke:0.15px #fff">فیزیکی</div>
<div style="left:1089px;top:976px;width:120px;height:47px;background:#0098cc"></div>
<div class="t" style="left:1088px;width:121px;top:976.8px;line-height:20px;font-size:12px;font-weight:bold;color:#fff;text-align:center;-webkit-text-stroke:0.15px #fff">مبلغ مخارج انجام شده</div>
<div style="left:954px;top:976px;width:134px;height:47px;background:#0098cc"></div>
<div class="t" style="left:953px;width:135px;top:976.8px;line-height:20px;font-size:12px;font-weight:bold;color:#fff;text-align:center;-webkit-text-stroke:0.15px #fff">برآورد مخارج تکمیل پروژه</div>
<div style="left:835px;top:976px;width:118px;height:47px;background:#0098cc"></div>
<div class="t" style="left:834px;width:119px;top:976.8px;line-height:20px;font-size:12px;font-weight:bold;color:#fff;text-align:center;-webkit-text-stroke:0.15px #fff">برآورد مخارج کل پروژه</div>
<div style="left:741px;top:952px;width:93px;height:23px;background:#0098cc"></div>
<div class="t" style="left:740px;width:94px;top:953.5px;line-height:20px;font-size:12px;font-weight:bold;color:#fff;text-align:center;-webkit-text-stroke:0.15px #fff">اصلاحات</div>
<div style="left:805px;top:976px;width:29px;height:47px;background:#0098cc"></div>
<div class="t" style="left:804px;width:30px;top:976.8px;line-height:20px;font-size:12px;font-weight:bold;color:#fff;text-align:center;-webkit-text-stroke:0.15px #fff">متراژ</div>
<div style="left:741px;top:976px;width:63px;height:47px;background:#0098cc"></div>
<div class="t" style="left:740px;width:64px;top:976.8px;line-height:20px;font-size:12px;font-weight:bold;color:#fff;text-align:center;-webkit-text-stroke:0.15px #fff">مبلغ مخارج</div>
<div style="left:568px;top:952px;width:172px;height:23px;background:#0098cc"></div>
<div class="t" style="left:567px;width:173px;top:953.5px;line-height:20px;font-size:12px;font-weight:bold;color:#fff;text-align:center;-webkit-text-stroke:0.15px #fff">پروژه هاي فروش رفته در طي ماه</div>
<div style="left:703px;top:976px;width:37px;height:47px;background:#0098cc"></div>
<div class="t" style="left:702px;width:38px;top:976.8px;line-height:20px;font-size:12px;font-weight:bold;color:#fff;text-align:center;-webkit-text-stroke:0.15px #fff">متراژ</div>
<div style="left:568px;top:976px;width:134px;height:47px;background:#0098cc"></div>
<div class="t" style="left:567px;width:135px;top:976.8px;line-height:20px;font-size:12px;font-weight:bold;color:#fff;text-align:center;-webkit-text-stroke:0.15px #fff">مبلغ بهاي تمام شده</div>
<div style="left:35px;top:952px;width:532px;height:23px;background:#0098cc"></div>
<div class="t" style="left:35px;width:532px;top:953.5px;line-height:20px;font-size:12px;font-weight:bold;color:#fff;text-align:center;-webkit-text-stroke:0.15px #fff">وضعیت در پایان ماه</div>
<div style="left:489px;top:976px;width:78px;height:47px;background:#0098cc"></div>
<div class="t" style="left:488px;width:79px;top:976.8px;line-height:20px;font-size:12px;font-weight:bold;color:#fff;text-align:center;-webkit-text-stroke:0.15px #fff">متراژ باقیمانده</div>
<div style="left:411px;top:976px;width:77px;height:23px;background:#0098cc"></div>
<div class="t" style="left:410px;width:78px;top:977.0px;line-height:20px;font-size:12px;font-weight:bold;color:#fff;text-align:center;-webkit-text-stroke:0.15px #fff">درصد پیشرفت</div>
<div style="left:411px;top:1000px;width:77px;height:23px;background:#0098cc"></div>
<div class="t" style="left:410px;width:78px;top:1001.0px;line-height:20px;font-size:12px;font-weight:bold;color:#fff;text-align:center;-webkit-text-stroke:0.15px #fff">فیزیکی</div>
<div style="left:290px;top:976px;width:120px;height:47px;background:#0098cc"></div>
<div class="t" style="left:289px;width:121px;top:976.8px;line-height:20px;font-size:12px;font-weight:bold;color:#fff;text-align:center;-webkit-text-stroke:0.15px #fff">مبلغ مخارج انجام شده</div>
<div style="left:155px;top:976px;width:134px;height:47px;background:#0098cc"></div>
<div class="t" style="left:154px;width:135px;top:976.8px;line-height:20px;font-size:12px;font-weight:bold;color:#fff;text-align:center;-webkit-text-stroke:0.15px #fff">برآورد مخارج تکمیل پروژه</div>
<div style="left:35px;top:976px;width:119px;height:47px;background:#0098cc"></div>
<div class="t" style="left:35px;width:119px;top:976.8px;line-height:20px;font-size:12px;font-weight:bold;color:#fff;text-align:center;-webkit-text-stroke:0.15px #fff">برآورد مخارج کل پروژه</div>
<div style="left:35px;top:1023px;width:1850px;height:73px;background:#b0b0b0"></div>
<div style="left:36px;top:1023px;width:118px;height:24px;background:#ececec"></div>
<div class="t" style="left:35px;width:119px;top:1024.5px;line-height:20px;font-size:12px;font-weight:normal;color:#1a4a5e;text-align:center;"><bdi dir="ltr">۱</bdi></div>
<div style="left:155px;top:1023px;width:134px;height:24px;background:#ececec"></div>
<div class="t" style="left:154px;width:135px;top:1024.5px;line-height:20px;font-size:12px;font-weight:normal;color:#1a4a5e;text-align:center;"><bdi dir="ltr"><i class="z"></i></bdi></div>
<div style="left:290px;top:1023px;width:120px;height:24px;background:#fde0a0"></div>
<div class="t" style="left:289px;width:121px;top:1024.5px;line-height:20px;font-size:12px;font-weight:normal;color:#1a4a5e;text-align:center;"><bdi dir="ltr">۱</bdi></div>
<div style="left:411px;top:1023px;width:77px;height:24px;background:#ececec"></div>
<div class="t" style="left:410px;width:78px;top:1024.5px;line-height:20px;font-size:12px;font-weight:normal;color:#1a4a5e;text-align:center;"><bdi dir="ltr">۱<i class="z"></i><i class="z"></i></bdi></div>
<div style="left:489px;top:1023px;width:78px;height:24px;background:#fde0a0"></div>
<div class="t" style="left:488px;width:79px;top:1024.5px;line-height:20px;font-size:12px;font-weight:normal;color:#e01b1b;text-align:center;"><bdi dir="ltr">(۱۲۴)</bdi></div>
<div style="left:568px;top:1023px;width:134px;height:24px;background:#ececec"></div>
<div class="t" style="left:567px;width:135px;top:1024.5px;line-height:20px;font-size:12px;font-weight:normal;color:#1a4a5e;text-align:center;"><bdi dir="ltr">۲,۱۶۱</bdi></div>
<div style="left:703px;top:1023px;width:37px;height:24px;background:#ececec"></div>
<div class="t" style="left:702px;width:38px;top:1024.5px;line-height:20px;font-size:12px;font-weight:normal;color:#1a4a5e;text-align:center;"><bdi dir="ltr">۱۲۴</bdi></div>
<div style="left:741px;top:1023px;width:63px;height:24px;background:#ececec"></div>
<div class="t" style="left:740px;width:64px;top:1024.5px;line-height:20px;font-size:12px;font-weight:normal;color:#1a4a5e;text-align:center;"><bdi dir="ltr">۲,۱۶۲</bdi></div>
<div style="left:805px;top:1023px;width:29px;height:24px;background:#ececec"></div>
<div class="t" style="left:804px;width:30px;top:1024.5px;line-height:20px;font-size:12px;font-weight:normal;color:#1a4a5e;text-align:center;"><bdi dir="ltr"><i class="z"></i></bdi></div>
<div style="left:835px;top:1023px;width:118px;height:24px;background:#ececec"></div>
<div class="t" style="left:834px;width:119px;top:1024.5px;line-height:20px;font-size:12px;font-weight:normal;color:#1a4a5e;text-align:center;"><bdi dir="ltr">۱</bdi></div>
<div style="left:954px;top:1023px;width:134px;height:24px;background:#ececec"></div>
<div class="t" style="left:953px;width:135px;top:1024.5px;line-height:20px;font-size:12px;font-weight:normal;color:#1a4a5e;text-align:center;"><bdi dir="ltr"><i class="z"></i></bdi></div>
<div style="left:1089px;top:1023px;width:120px;height:24px;background:#ececec"></div>
<div class="t" style="left:1088px;width:121px;top:1024.5px;line-height:20px;font-size:12px;font-weight:normal;color:#1a4a5e;text-align:center;"><bdi dir="ltr"><i class="z"></i></bdi></div>
<div style="left:1210px;top:1023px;width:77px;height:24px;background:#ececec"></div>
<div class="t" style="left:1209px;width:78px;top:1024.5px;line-height:20px;font-size:12px;font-weight:normal;color:#1a4a5e;text-align:center;"><bdi dir="ltr"><i class="z"></i></bdi></div>
<div style="left:1288px;top:1023px;width:29px;height:24px;background:#ececec"></div>
<div class="t" style="left:1287px;width:30px;top:1024.5px;line-height:20px;font-size:12px;font-weight:normal;color:#1a4a5e;text-align:center;"><bdi dir="ltr"><i class="z"></i></bdi></div>
<div style="left:1318px;top:1023px;width:159px;height:24px;background:#ececec"></div>
<div class="t" style="left:1317px;width:160px;top:1024.5px;line-height:20px;font-size:12px;font-weight:normal;color:#1a4a5e;text-align:center;"><bdi dir="ltr">۱۲۴</bdi></div>
<div style="left:1478px;top:1023px;width:44px;height:24px;background:#ececec"></div>
<div class="t" style="right:400px;top:1024.5px;line-height:20px;font-size:12px;font-weight:normal;color:#1a4a5e;word-spacing:-1px">مترمربع</div>
<div style="left:1523px;top:1023px;width:72px;height:24px;background:#ececec"></div>
<div class="t" style="left:1522px;width:73px;top:1024.5px;line-height:20px;font-size:12px;font-weight:normal;color:#1a4a5e;text-align:center;"><bdi dir="ltr">۱<i class="z"></i><i class="z"></i></bdi></div>
<div style="left:1596px;top:1023px;width:38px;height:24px;background:#ececec"></div>
<div class="t" style="right:288px;top:1024.5px;line-height:20px;font-size:12px;font-weight:normal;color:#1a4a5e;word-spacing:-1px">تجاري</div>
<div style="left:1635px;top:1023px;width:83px;height:24px;background:#ececec"></div>
<div class="t" style="right:204px;top:1024.5px;line-height:20px;font-size:12px;font-weight:normal;color:#1a4a5e;word-spacing:-1px">محمد شهر کرج</div>
<div style="left:1719px;top:1023px;width:165px;height:24px;background:#ececec"></div>
<div class="t" style="right:38px;top:1024.5px;line-height:20px;font-size:12px;font-weight:normal;color:#1a4a5e;word-spacing:-1px">تجاري محمد شهر - نويد ايرانيان</div>
<div style="left:36px;top:1048px;width:118px;height:23px;background:#d1e4f6"></div>
<div class="t" style="left:35px;width:119px;top:1048.5px;line-height:20px;font-size:12px;font-weight:normal;color:#1a4a5e;text-align:center;"><bdi dir="ltr">۱</bdi></div>
<div style="left:155px;top:1048px;width:134px;height:23px;background:#d1e4f6"></div>
<div class="t" style="left:154px;width:135px;top:1048.5px;line-height:20px;font-size:12px;font-weight:normal;color:#1a4a5e;text-align:center;"><bdi dir="ltr"><i class="z"></i></bdi></div>
<div style="left:290px;top:1048px;width:120px;height:23px;background:#fde0a0"></div>
<div class="t" style="left:289px;width:121px;top:1048.5px;line-height:20px;font-size:12px;font-weight:normal;color:#1a4a5e;text-align:center;"><bdi dir="ltr">۱</bdi></div>
<div style="left:411px;top:1048px;width:77px;height:23px;background:#d1e4f6"></div>
<div class="t" style="left:410px;width:78px;top:1048.5px;line-height:20px;font-size:12px;font-weight:normal;color:#1a4a5e;text-align:center;"><bdi dir="ltr">۱<i class="z"></i><i class="z"></i></bdi></div>
<div style="left:489px;top:1048px;width:78px;height:23px;background:#fde0a0"></div>
<div class="t" style="left:488px;width:79px;top:1048.5px;line-height:20px;font-size:12px;font-weight:normal;color:#e01b1b;text-align:center;"><bdi dir="ltr">(۴۲۴)</bdi></div>
<div style="left:568px;top:1048px;width:134px;height:23px;background:#d1e4f6"></div>
<div class="t" style="left:567px;width:135px;top:1048.5px;line-height:20px;font-size:12px;font-weight:normal;color:#1a4a5e;text-align:center;"><bdi dir="ltr">۱۵,۴۲۹</bdi></div>
<div style="left:703px;top:1048px;width:37px;height:23px;background:#d1e4f6"></div>
<div class="t" style="left:702px;width:38px;top:1048.5px;line-height:20px;font-size:12px;font-weight:normal;color:#1a4a5e;text-align:center;"><bdi dir="ltr">۴۲۴</bdi></div>
<div style="left:741px;top:1048px;width:63px;height:23px;background:#d1e4f6"></div>
<div class="t" style="left:740px;width:64px;top:1048.5px;line-height:20px;font-size:12px;font-weight:normal;color:#1a4a5e;text-align:center;"><bdi dir="ltr">۱۵,۴۳<i class="z"></i></bdi></div>
<div style="left:805px;top:1048px;width:29px;height:23px;background:#d1e4f6"></div>
<div class="t" style="left:804px;width:30px;top:1048.5px;line-height:20px;font-size:12px;font-weight:normal;color:#1a4a5e;text-align:center;"><bdi dir="ltr"><i class="z"></i></bdi></div>
<div style="left:835px;top:1048px;width:118px;height:23px;background:#d1e4f6"></div>
<div class="t" style="left:834px;width:119px;top:1048.5px;line-height:20px;font-size:12px;font-weight:normal;color:#1a4a5e;text-align:center;"><bdi dir="ltr">۱</bdi></div>
<div style="left:954px;top:1048px;width:134px;height:23px;background:#d1e4f6"></div>
<div class="t" style="left:953px;width:135px;top:1048.5px;line-height:20px;font-size:12px;font-weight:normal;color:#1a4a5e;text-align:center;"><bdi dir="ltr"><i class="z"></i></bdi></div>
<div style="left:1089px;top:1048px;width:120px;height:23px;background:#d1e4f6"></div>
<div class="t" style="left:1088px;width:121px;top:1048.5px;line-height:20px;font-size:12px;font-weight:normal;color:#1a4a5e;text-align:center;"><bdi dir="ltr"><i class="z"></i></bdi></div>
<div style="left:1210px;top:1048px;width:77px;height:23px;background:#d1e4f6"></div>
<div class="t" style="left:1209px;width:78px;top:1048.5px;line-height:20px;font-size:12px;font-weight:normal;color:#1a4a5e;text-align:center;"><bdi dir="ltr"><i class="z"></i></bdi></div>
<div style="left:1288px;top:1048px;width:29px;height:23px;background:#d1e4f6"></div>
<div class="t" style="left:1287px;width:30px;top:1048.5px;line-height:20px;font-size:12px;font-weight:normal;color:#1a4a5e;text-align:center;"><bdi dir="ltr"><i class="z"></i></bdi></div>
<div style="left:1318px;top:1048px;width:159px;height:23px;background:#d1e4f6"></div>
<div class="t" style="left:1317px;width:160px;top:1048.5px;line-height:20px;font-size:12px;font-weight:normal;color:#1a4a5e;text-align:center;"><bdi dir="ltr">۴۲۴</bdi></div>
<div style="left:1478px;top:1048px;width:44px;height:23px;background:#d1e4f6"></div>
<div class="t" style="right:400px;top:1048.5px;line-height:20px;font-size:12px;font-weight:normal;color:#1a4a5e;word-spacing:-1px">مترمربع</div>
<div style="left:1523px;top:1048px;width:72px;height:23px;background:#d1e4f6"></div>
<div class="t" style="left:1522px;width:73px;top:1048.5px;line-height:20px;font-size:12px;font-weight:normal;color:#1a4a5e;text-align:center;"><bdi dir="ltr">۱<i class="z"></i><i class="z"></i></bdi></div>
<div style="left:1596px;top:1048px;width:38px;height:23px;background:#d1e4f6"></div>
<div class="t" style="right:288px;top:1048.5px;line-height:20px;font-size:12px;font-weight:normal;color:#1a4a5e;word-spacing:-1px">تجاري</div>
<div style="left:1635px;top:1048px;width:83px;height:23px;background:#d1e4f6"></div>
<div class="t" style="right:204px;top:1048.5px;line-height:20px;font-size:12px;font-weight:normal;color:#1a4a5e;word-spacing:-1px">محمد شهر کرج</div>
<div style="left:1719px;top:1048px;width:165px;height:23px;background:#d1e4f6"></div>
<div class="t" style="right:38px;top:1048.5px;line-height:20px;font-size:12px;font-weight:normal;color:#1a4a5e;word-spacing:-1px">تجاري محمد شهر</div>
<div style="left:36px;top:1072px;width:118px;height:23px;background:#fde0a0"></div>
<div class="t" style="left:35px;width:119px;top:1072.5px;line-height:20px;font-size:12px;font-weight:normal;color:#1a4a5e;text-align:center;"><bdi dir="ltr">۱۱</bdi></div>
<div style="left:155px;top:1072px;width:134px;height:23px;background:#fde0a0"></div>
<div style="left:290px;top:1072px;width:120px;height:23px;background:#fde0a0"></div>
<div class="t" style="left:289px;width:121px;top:1072.5px;line-height:20px;font-size:12px;font-weight:normal;color:#1a4a5e;text-align:center;"><bdi dir="ltr">۱۱</bdi></div>
<div style="left:411px;top:1072px;width:77px;height:23px;background:#d1e4f6"></div>
<div style="left:489px;top:1072px;width:78px;height:23px;background:#fde0a0"></div>
<div class="t" style="left:488px;width:79px;top:1072.5px;line-height:20px;font-size:12px;font-weight:normal;color:#e01b1b;text-align:center;"><bdi dir="ltr">(۵۴۸)</bdi></div>
<div style="left:568px;top:1072px;width:134px;height:23px;background:#fde0a0"></div>
<div class="t" style="left:567px;width:135px;top:1072.5px;line-height:20px;font-size:12px;font-weight:normal;color:#1a4a5e;text-align:center;"><bdi dir="ltr">۱۷,۵۹<i class="z"></i></bdi></div>
<div style="left:703px;top:1072px;width:37px;height:23px;background:#fde0a0"></div>
<div class="t" style="left:702px;width:38px;top:1072.5px;line-height:20px;font-size:12px;font-weight:normal;color:#1a4a5e;text-align:center;"><bdi dir="ltr">۵۴۸</bdi></div>
<div style="left:741px;top:1072px;width:63px;height:23px;background:#fde0a0"></div>
<div class="t" style="left:740px;width:64px;top:1072.5px;line-height:20px;font-size:12px;font-weight:normal;color:#1a4a5e;text-align:center;"><bdi dir="ltr">۱۷,۵۹۲</bdi></div>
<div style="left:805px;top:1072px;width:29px;height:23px;background:#fde0a0"></div>
<div style="left:835px;top:1072px;width:118px;height:23px;background:#fde0a0"></div>
<div class="t" style="left:834px;width:119px;top:1072.5px;line-height:20px;font-size:12px;font-weight:normal;color:#1a4a5e;text-align:center;"><bdi dir="ltr">۱۱</bdi></div>
<div style="left:954px;top:1072px;width:134px;height:23px;background:#fde0a0"></div>
<div style="left:1089px;top:1072px;width:120px;height:23px;background:#fde0a0"></div>
<div style="left:1210px;top:1072px;width:77px;height:23px;background:#d1e4f6"></div>
<div style="left:1288px;top:1072px;width:29px;height:23px;background:#fde0a0"></div>
<div style="left:1318px;top:1072px;width:159px;height:23px;background:#fde0a0"></div>
<div style="left:1478px;top:1072px;width:44px;height:23px;background:#fde0a0"></div>
<div style="left:1523px;top:1072px;width:72px;height:23px;background:#d1e4f6"></div>
<div style="left:1596px;top:1072px;width:38px;height:23px;background:#fde0a0"></div>
<div style="left:1635px;top:1072px;width:83px;height:23px;background:#fde0a0"></div>
<div style="left:1719px;top:1072px;width:165px;height:23px;background:#fde0a0"></div>
<div class="t" style="left:960px;top:540px;font-size:94px;font-weight:bold;color:#333;-webkit-text-stroke:1px #333;opacity:0.058;transform:translate(-50%,-50%) rotate(-45.5deg);direction:ltr;line-height:100px;white-space:nowrap">@Codal360_ir</div>
</body></html>
